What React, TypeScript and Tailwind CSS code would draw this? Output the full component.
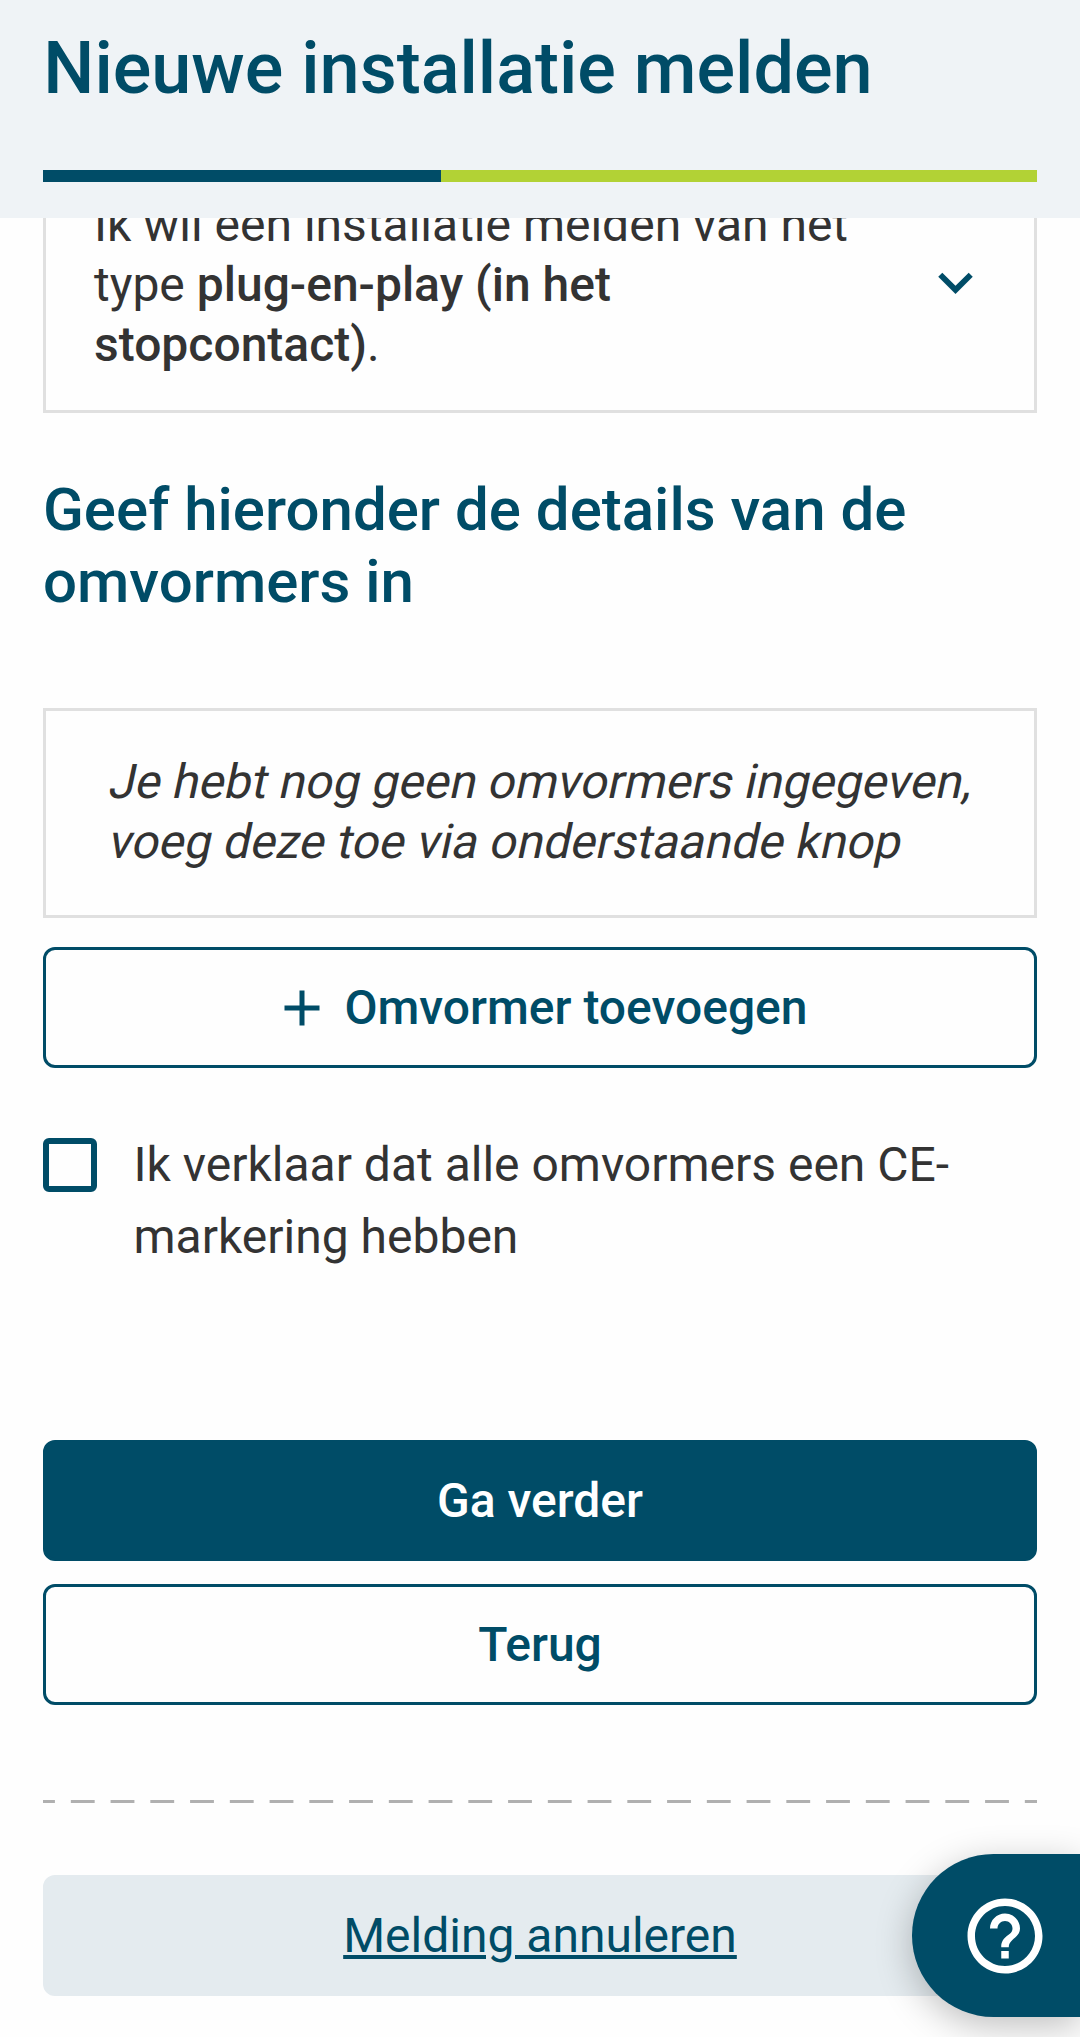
import type { ReactNode } from "react";
import { MdAdd, MdExpandMore, MdHelpOutline } from "react-icons/md";

function Button({ className = "", children }: { className?: string; children: ReactNode }) {
  return (
    <button
      className={`flex h-[121px] w-full items-center justify-center rounded-xl border-[3px] text-[48px] leading-[60px] ${className}`}
    >
      {children}
    </button>
  );
}

export default function App() {
  return (
    <div className="relative h-[2037px] w-[1080px] overflow-hidden bg-[#fefefe] font-[Roboto,sans-serif] text-[#333333]">
      <header className="relative z-10 h-[218px] bg-[#eff3f6] px-[43px] pt-6">
        <h1 className="pl-[0.3px] text-[72px] leading-[90px] font-medium text-[#004c67]">Nieuwe installatie melden</h1>
        <div className="mt-[56px] flex h-3 bg-[#b2d235]">
          <div className="w-[398px] bg-[#004c67]" />
        </div>
      </header>

      <main className="px-[43px]">
        <section className="-mt-[63px] flex items-center justify-between border-[3px] border-[#e0e0e0] pt-[37px] pr-[44px] pb-[35px] pl-12">
          <p className="w-[780px] text-[48px] leading-[60px]">
            Ik wil een installatie melden van het type <b className="font-medium">plug-en-play (in het</b>
            <br />
            <b className="font-medium">stopcontact)</b>.
          </p>
          <MdExpandMore className="mb-1.5 size-[69px] text-[#004c67]" />
        </section>

        <h2 className="mt-[61px] text-[60px] leading-[72px] font-medium text-[#004c67]">
          Geef hieronder de details van de omvormers in
        </h2>

        <section className="mt-[90px] h-[210px] border-[3px] border-[#e0e0e0] pt-[41px] pl-[61px]">
          <p className="text-[48px] leading-[60px] whitespace-nowrap">
            <span className="block origin-[0_46px] -skew-x-12">Je hebt nog geen omvormers ingegeven,</span>
            <span className="block origin-[0_46px] -skew-x-12">voeg deze toe via onderstaande knop</span>
          </p>
        </section>

        <Button className="mt-[29px] gap-3 border-[#004c67] font-medium text-[#004c67]">
          <MdAdd className="size-[60px]" />
          Omvormer toevoegen
        </Button>

        <label className="mt-[61px] flex items-start gap-[36.5px]">
          <span className="mt-[9px] size-[54px] shrink-0 rounded-md border-[6px] border-[#004c67]" />
          <span className="text-[48px] leading-[72px]">
            Ik verklaar dat alle omvormers een CE-
            <br />
            markering hebben
          </span>
        </label>

        <Button className="mt-[167px] border-[#004c67] bg-[#004c67] font-medium text-white">Ga verder</Button>
        <Button className="mt-[23px] border-[#004c67] font-medium text-[#004c67]">Terug</Button>

        <div className="mt-[95px] h-[3px] bg-[linear-gradient(90deg,#b0b0b0_12.2px,transparent_12.2px,transparent_27.6px,#b0b0b0_27.6px)] bg-[length:39.76px_100%]" />

        <Button className="mt-[72px] border-[#e4ebef] bg-[#e4ebef] text-[#004c67]">
          <span className="underline">Melding annuleren</span>
        </Button>
      </main>

      <button className="absolute top-[1854px] right-0 flex h-[163px] w-[168px] items-center rounded-l-full bg-[#004c67] pl-12 text-white shadow-[0_9px_36px_rgba(0,0,0,0.25)]">
        <MdHelpOutline className="size-[90px]" />
      </button>
    </div>
  );
}
